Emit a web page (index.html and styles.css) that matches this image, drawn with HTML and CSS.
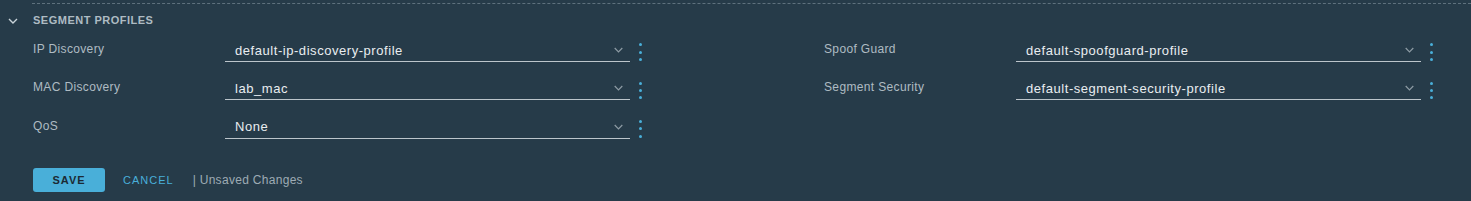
FILE: index.html
```html
<!DOCTYPE html>
<html>
<head>
<meta charset="utf-8">
<link rel="stylesheet" href="styles.css">
</head>
<body>
<div class="panel">
  <div class="divider"></div>
  <div class="header">
    <svg class="caret" width="10" height="6" viewBox="0 0 10 6"><path d="M1 1 L5 5 L9 1" fill="none" stroke="#c9d3d9" stroke-width="1.4"/></svg>
    <span class="title">SEGMENT PROFILES</span>
  </div>
  <div class="columns">
    <div class="col">
      <div class="row">
        <div class="label">IP Discovery</div>
        <div class="select"><span class="value">default-ip-discovery-profile</span><svg class="chev" width="9" height="6" viewBox="0 0 9 6"><path d="M0.7 1 L4.5 4.8 L8.3 1" fill="none" stroke="#8d9ba4" stroke-width="1.2"/></svg></div>
        <div class="kebab"><i></i><i></i><i></i></div>
      </div>
      <div class="row">
        <div class="label">MAC Discovery</div>
        <div class="select"><span class="value">lab_mac</span><svg class="chev" width="9" height="6" viewBox="0 0 9 6"><path d="M0.7 1 L4.5 4.8 L8.3 1" fill="none" stroke="#8d9ba4" stroke-width="1.2"/></svg></div>
        <div class="kebab"><i></i><i></i><i></i></div>
      </div>
      <div class="row">
        <div class="label">QoS</div>
        <div class="select"><span class="value">None</span><svg class="chev" width="9" height="6" viewBox="0 0 9 6"><path d="M0.7 1 L4.5 4.8 L8.3 1" fill="none" stroke="#8d9ba4" stroke-width="1.2"/></svg></div>
        <div class="kebab"><i></i><i></i><i></i></div>
      </div>
    </div>
    <div class="col">
      <div class="row">
        <div class="label">Spoof Guard</div>
        <div class="select"><span class="value">default-spoofguard-profile</span><svg class="chev" width="9" height="6" viewBox="0 0 9 6"><path d="M0.7 1 L4.5 4.8 L8.3 1" fill="none" stroke="#8d9ba4" stroke-width="1.2"/></svg></div>
        <div class="kebab"><i></i><i></i><i></i></div>
      </div>
      <div class="row">
        <div class="label">Segment Security</div>
        <div class="select"><span class="value">default-segment-security-profile</span><svg class="chev" width="9" height="6" viewBox="0 0 9 6"><path d="M0.7 1 L4.5 4.8 L8.3 1" fill="none" stroke="#8d9ba4" stroke-width="1.2"/></svg></div>
        <div class="kebab"><i></i><i></i><i></i></div>
      </div>
    </div>
  </div>
  <div class="actions">
    <button class="btn-save">SAVE</button>
    <button class="btn-cancel">CANCEL</button>
    <span class="unsaved">| Unsaved Changes</span>
  </div>
</div>
</body>
</html>
```
FILE: styles.css
```css
html, body {
  margin: 0;
  padding: 0;
  background: #263b49;
  height: 201px;
  overflow: hidden;
}
body {
  font-family: "Liberation Sans", Arial, sans-serif;
  color: #e6eaed;
}
.panel {
  padding-top: 3px;
}
.divider {
  margin-left: 32px;
  border-top: 1px dashed #5e717d;
  height: 0;
}
.header {
  display: flex;
  align-items: center;
  height: 27px;
  box-sizing: border-box;
  padding-top: 5px;
}
.caret {
  margin-left: 8px;
  margin-right: 15px;
  margin-top: 2px;
}
.title {
  font-size: 11px;
  font-weight: bold;
  color: #aebbc3;
  letter-spacing: 0.5px;
}
.columns {
  display: grid;
  grid-template-columns: 791px 1fr;
  padding-left: 33px;
}
.col {
  display: flex;
  flex-direction: column;
}
.row {
  display: flex;
  align-items: center;
  height: 38.3px;
}
.label {
  width: 192px;
  font-size: 12px;
  letter-spacing: 0.35px;
  color: #afbbc3;
  margin-top: -2px;
}
.select {
  width: 405px;
  height: 24px;
  border-bottom: 1px solid #bcc5cb;
  display: flex;
  align-items: center;
  justify-content: space-between;
  box-sizing: border-box;
  padding: 0 7px 0 10px;
}
.value {
  font-size: 13px;
  letter-spacing: 0.55px;
  color: #e9edf0;
  margin-top: 1px;
}
.chev {
  margin-top: 1px;
}
.kebab {
  width: 20px;
  display: flex;
  flex-direction: column;
  align-items: center;
  gap: 4.3px;
  margin-top: 4px;
}
.kebab i {
  display: block;
  width: 3px;
  height: 3px;
  border-radius: 50%;
  background: #49afd9;
}
.actions {
  display: flex;
  align-items: center;
  padding-left: 33px;
  margin-top: 22px;
}
.btn-save {
  width: 72px;
  height: 24px;
  border: none;
  border-radius: 3px;
  background: #49afd9;
  color: #1c2a33;
  font-family: "Liberation Sans", Arial, sans-serif;
  font-size: 11px;
  font-weight: bold;
  letter-spacing: 1px;
  padding: 0;
}
.btn-cancel {
  border: none;
  background: none;
  color: #49afd9;
  font-family: "Liberation Sans", Arial, sans-serif;
  font-size: 11px;
  letter-spacing: 1px;
  padding: 0;
  margin-left: 18px;
}
.unsaved {
  margin-left: 19px;
  font-size: 12px;
  letter-spacing: 0.3px;
  color: #9eabb4;
}
```
